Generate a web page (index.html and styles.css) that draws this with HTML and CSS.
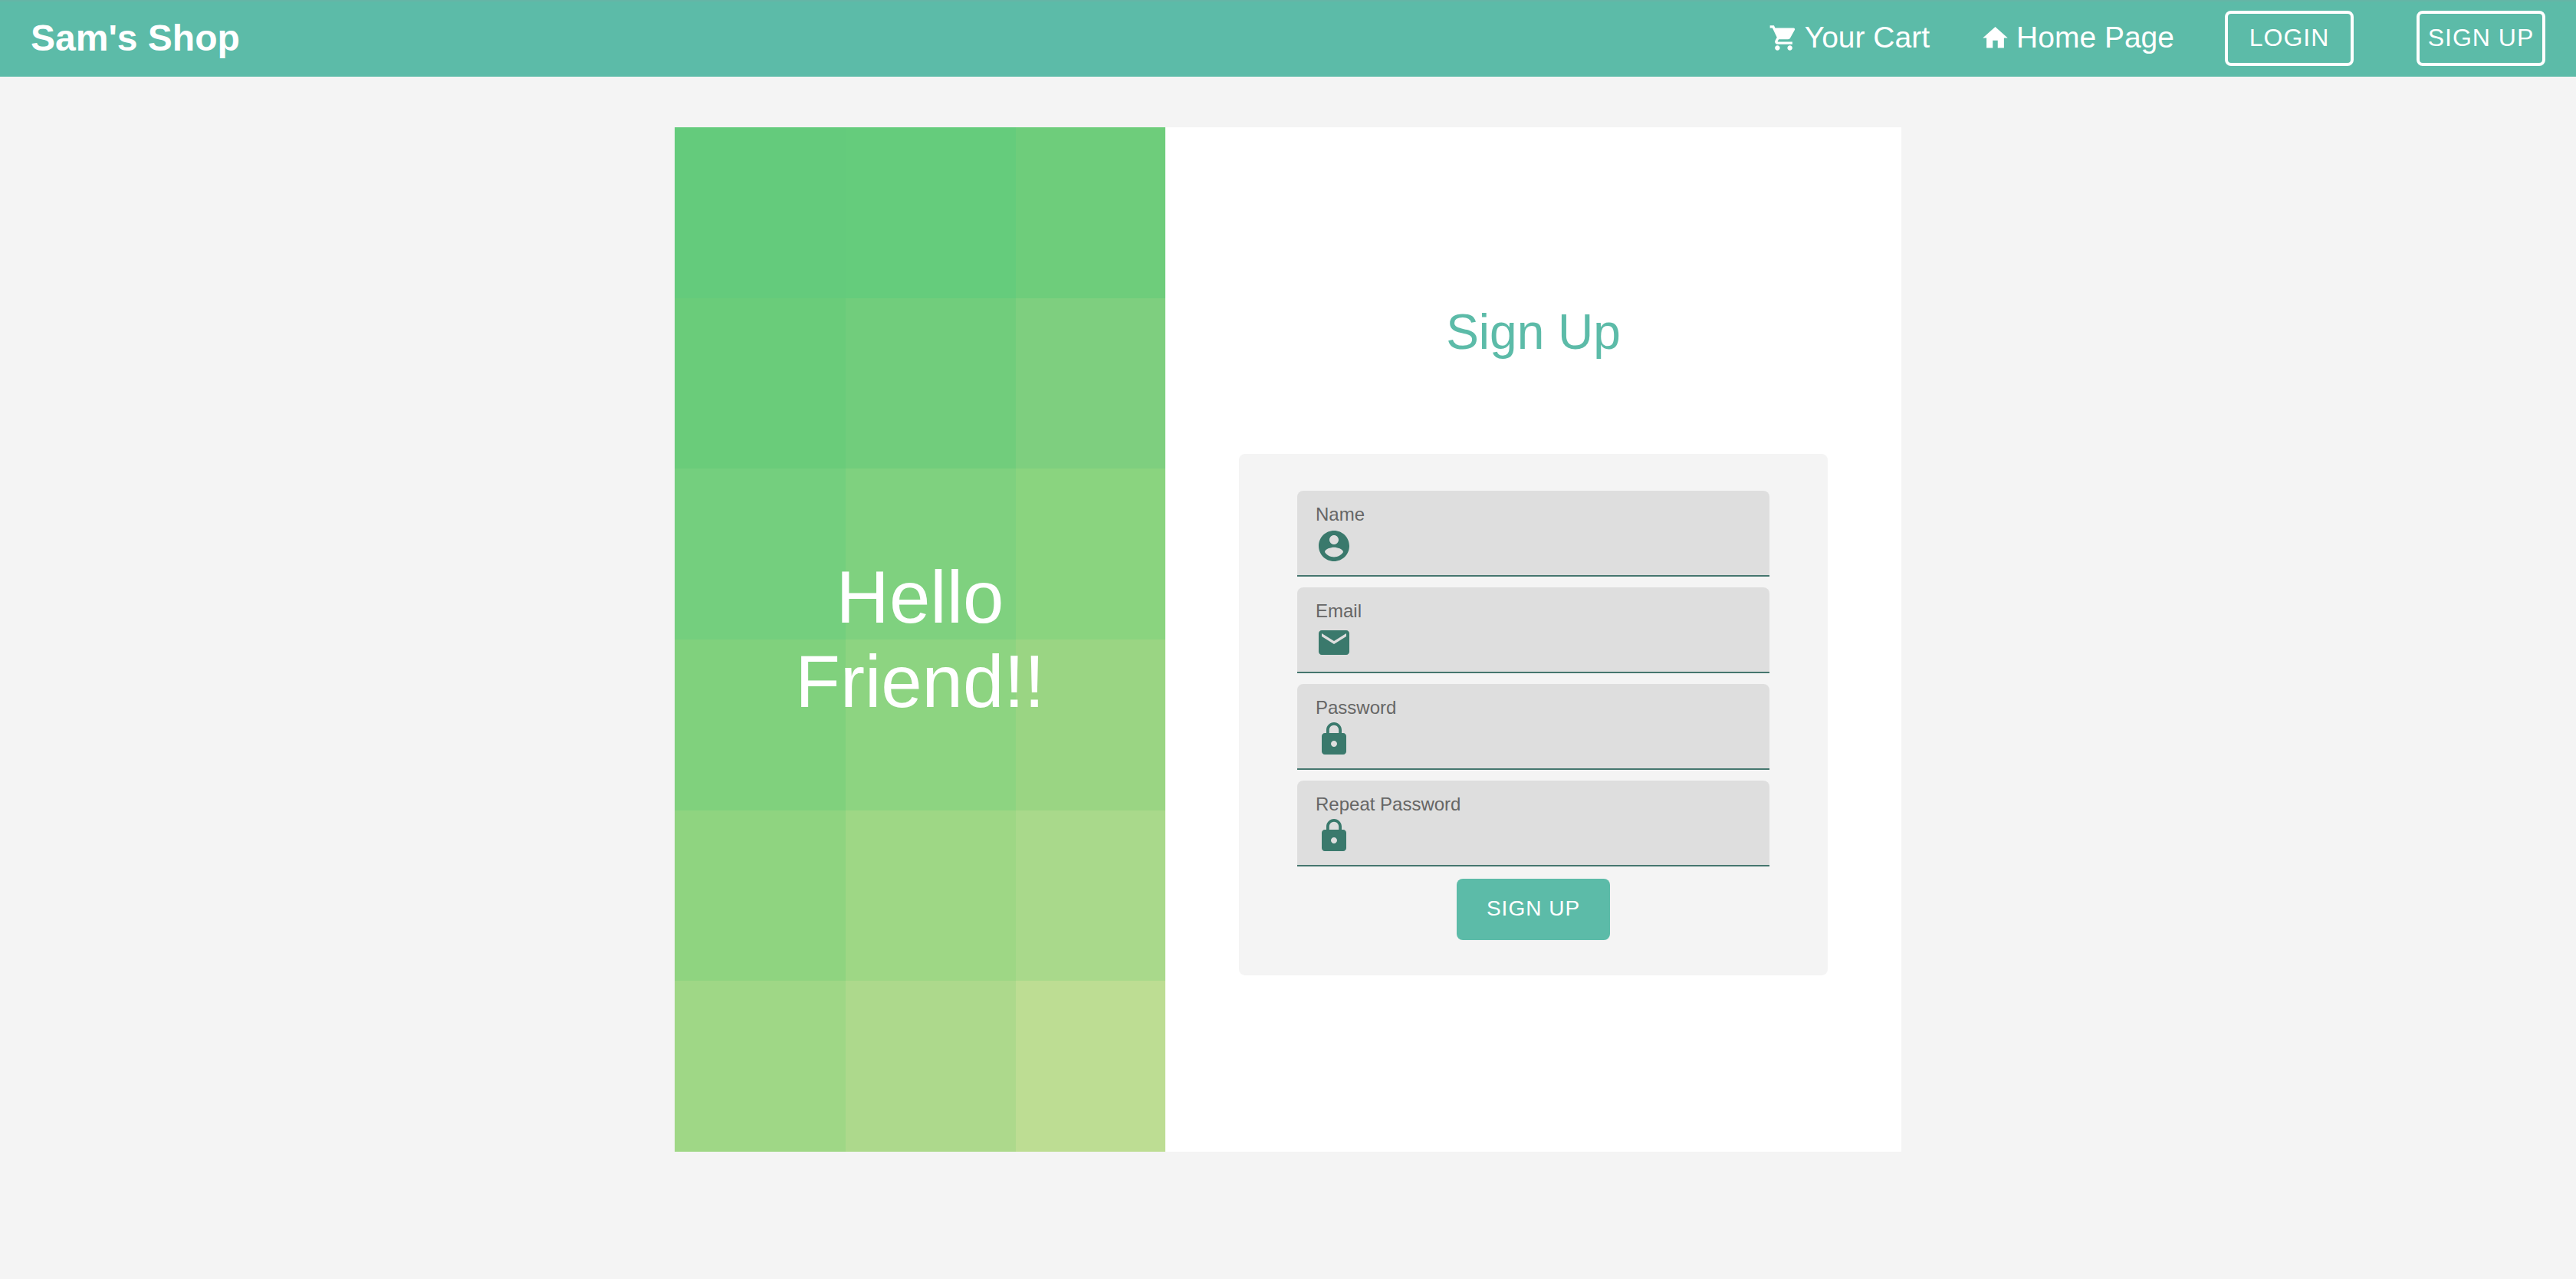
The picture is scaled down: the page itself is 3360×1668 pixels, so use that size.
FILE: index.html
```html
<!DOCTYPE html>
<html lang="en">
<head>
  <meta charset="utf-8">
  <meta name="viewport" content="width=device-width, initial-scale=1">
  <title>Sam's Shop</title>
  <link rel="stylesheet" href="styles.css">
</head>
<body>
  <header class="topbar">
    <a class="brand" href="#">Sam's Shop</a>
    <nav class="nav">
      <a class="nav-link" href="#">
        <svg class="nav-icon" viewBox="0 0 24 24" aria-hidden="true"><path d="M7 18c-1.1 0-1.99.9-1.99 2S5.9 22 7 22s2-.9 2-2-.9-2-2-2zM1 2v2h2l3.6 7.59-1.35 2.45c-.16.28-.25.61-.25.96 0 1.1.9 2 2 2h12v-2H7.42c-.14 0-.25-.11-.25-.25l.03-.12.9-1.63h7.45c.75 0 1.41-.41 1.75-1.03l3.58-6.49c.08-.14.12-.31.12-.48 0-.55-.45-1-1-1H5.21l-.94-2H1zm16 16c-1.1 0-1.99.9-1.99 2s.89 2 1.99 2 2-.9 2-2-.9-2-2-2z"/></svg>
        Your Cart
      </a>
      <a class="nav-link" href="#">
        <svg class="nav-icon" viewBox="0 0 24 24" aria-hidden="true"><path d="M10 20v-6h4v6h5v-8h3L12 3 2 12h3v8z"/></svg>
        Home Page
      </a>
      <div class="nav-actions">
        <button class="outline-button" type="button">LOGIN</button>
        <button class="outline-button" type="button">SIGN UP</button>
      </div>
    </nav>
  </header>

  <main class="page">
    <section class="card">
      <div class="welcome">
        <svg class="mosaic" viewBox="0 0 3 6" preserveAspectRatio="xMinYMin slice" shape-rendering="crispEdges" aria-hidden="true">
          <rect x="0" y="0" width="1" height="1" fill="#64cb7c"/>
          <rect x="1" y="0" width="1" height="1" fill="#65cc7c"/>
          <rect x="2" y="0" width="1" height="1" fill="#6ecd7b"/>
          <rect x="0" y="1" width="1" height="1" fill="#6acc7a"/>
          <rect x="1" y="1" width="1" height="1" fill="#71cd7c"/>
          <rect x="2" y="1" width="1" height="1" fill="#7ecf7f"/>
          <rect x="0" y="2" width="1" height="1" fill="#74cf7e"/>
          <rect x="1" y="2" width="1" height="1" fill="#7fd17f"/>
          <rect x="2" y="2" width="1" height="1" fill="#8ad47f"/>
          <rect x="0" y="3" width="1" height="1" fill="#80d17d"/>
          <rect x="1" y="3" width="1" height="1" fill="#8dd481"/>
          <rect x="2" y="3" width="1" height="1" fill="#9ad583"/>
          <rect x="0" y="4" width="1" height="1" fill="#8fd480"/>
          <rect x="1" y="4" width="1" height="1" fill="#9ed785"/>
          <rect x="2" y="4" width="1" height="1" fill="#a9d98b"/>
          <rect x="0" y="5" width="1" height="1" fill="#9fd786"/>
          <rect x="1" y="5" width="1" height="1" fill="#add98c"/>
          <rect x="2" y="5" width="1" height="1" fill="#bddd93"/>
        </svg>
        <p class="greeting">Hello<br>Friend!!</p>
      </div>

      <div class="signup">
        <h1 class="title">Sign Up</h1>
        <form class="form">
          <div class="fields">
            <div class="field">
              <label class="field-label" for="name">Name</label>
              <div class="field-row">
                <svg class="field-icon" viewBox="0 0 24 24" aria-hidden="true"><path d="M12 2C6.48 2 2 6.48 2 12s4.48 10 10 10 10-4.48 10-10S17.52 2 12 2zm0 3c1.66 0 3 1.34 3 3s-1.34 3-3 3-3-1.34-3-3 1.34-3 3-3zm0 14.2c-2.5 0-4.71-1.28-6-3.22.03-1.99 4-3.08 6-3.08 1.99 0 5.97 1.09 6 3.08-1.29 1.94-3.5 3.22-6 3.22z"/></svg>
                <input class="field-input" id="name" type="text">
              </div>
            </div>
            <div class="field">
              <label class="field-label" for="email">Email</label>
              <div class="field-row">
                <svg class="field-icon" viewBox="0 0 24 24" aria-hidden="true"><path d="M20 4H4c-1.1 0-1.99.9-1.99 2L2 18c0 1.1.9 2 2 2h16c1.1 0 2-.9 2-2V6c0-1.1-.9-2-2-2zm0 4l-8 5-8-5V6l8 5 8-5v2z"/></svg>
                <input class="field-input" id="email" type="email">
              </div>
            </div>
            <div class="field">
              <label class="field-label" for="password">Password</label>
              <div class="field-row">
                <svg class="field-icon" viewBox="0 0 24 24" aria-hidden="true"><path d="M18 8h-1V6c0-2.76-2.24-5-5-5S7 3.24 7 6v2H6c-1.1 0-2 .9-2 2v10c0 1.1.9 2 2 2h12c1.1 0 2-.9 2-2V10c0-1.1-.9-2-2-2zm-6 9c-1.1 0-2-.9-2-2s.9-2 2-2 2 .9 2 2-.9 2-2 2zm3.1-9H8.900V6c0-1.710 1.390-3.100 3.100-3.100 1.710 0 3.100 1.390 3.100 3.100v2z"/></svg>
                <input class="field-input" id="password" type="password">
              </div>
            </div>
            <div class="field">
              <label class="field-label" for="repeat">Repeat Password</label>
              <div class="field-row">
                <svg class="field-icon" viewBox="0 0 24 24" aria-hidden="true"><path d="M18 8h-1V6c0-2.76-2.24-5-5-5S7 3.24 7 6v2H6c-1.1 0-2 .9-2 2v10c0 1.1.9 2 2 2h12c1.1 0 2-.9 2-2V10c0-1.1-.9-2-2-2zm-6 9c-1.1 0-2-.9-2-2s.9-2 2-2 2 .9 2 2-.9 2-2 2zm3.1-9H8.900V6c0-1.710 1.390-3.100 3.100-3.100 1.710 0 3.100 1.390 3.100 3.100v2z"/></svg>
                <input class="field-input" id="repeat" type="password">
              </div>
            </div>
          </div>
          <button class="submit" type="submit">SIGN UP</button>
        </form>
      </div>
    </section>
  </main>
</body>
</html>
```
FILE: styles.css
```css
:root {
  --teal: #5cbba8;
  --teal-dark: #3a796c;
  --page: #f4f4f4;
}

* {
  box-sizing: border-box;
}

body {
  margin: 0;
  background: var(--page);
  font-family: "Liberation Sans", Arial, sans-serif;
}

.topbar {
  display: flex;
  align-items: center;
  justify-content: space-between;
  min-height: 100px;
  padding: 0 40px;
  background: var(--teal);
  box-shadow: inset 0 2px #65b5a6;
  color: #fff;
}

.brand {
  padding-bottom: 2px;
  color: inherit;
  font-size: 48px;
  font-weight: bold;
  text-decoration: none;
}

.nav {
  display: flex;
  align-items: center;
  gap: 66px;
}

.nav-link {
  display: flex;
  align-items: center;
  gap: 8px;
  padding-bottom: 2px;
  color: inherit;
  font-size: 39px;
  line-height: 44px;
  text-decoration: none;
}

.nav-icon {
  width: 39px;
  height: 39px;
  fill: currentColor;
}

.nav-actions {
  display: flex;
  gap: 82px;
}

.outline-button {
  width: 168px;
  height: 72px;
  padding: 0 0 2px;
  border: 4px solid #fff;
  border-radius: 8px;
  background: transparent;
  color: #fff;
  font-family: inherit;
  font-size: 32px;
  letter-spacing: 1px;
}

.page {
  padding: 66px 40px;
}

.card {
  display: grid;
  grid-template-columns: 2fr 3fr;
  max-width: 1600px;
  margin: 0 auto;
  background: #fff;
}

.welcome {
  position: relative;
  display: flex;
  align-items: center;
  justify-content: center;
}

.mosaic {
  position: absolute;
  inset: 0;
  width: 100%;
  height: 100%;
}

.greeting {
  position: relative;
  margin: 0;
  color: #fff;
  font-size: 96px;
  line-height: 110px;
  text-align: center;
}

.signup {
  display: flex;
  flex-direction: column;
  align-items: center;
  gap: 122px;
  padding: 230px 96px;
}

.title {
  margin: 0;
  color: var(--teal);
  font-size: 64px;
  font-weight: normal;
  line-height: 74px;
}

.form {
  display: flex;
  flex-direction: column;
  align-items: center;
  gap: 16px;
  width: 100%;
  padding: 48px 76px 46px;
  border-radius: 8px;
  background: var(--page);
}

.fields {
  display: flex;
  flex-direction: column;
  gap: 14px;
  width: 100%;
}

.field {
  padding: 16px 24px 14px;
  border-bottom: 2px solid #45766e;
  border-radius: 8px 8px 0 0;
  background: #dedede;
}

.field-label {
  display: block;
  margin-bottom: 2px;
  color: #666;
  font-size: 24px;
  line-height: 30px;
}

.field-row {
  display: flex;
  gap: 16px;
}

.field-icon {
  width: 48px;
  height: 48px;
  fill: var(--teal-dark);
}

.field-input {
  flex: 1;
  min-width: 0;
  padding: 0;
  border: 0;
  outline: 0;
  background: transparent;
  font: inherit;
  font-size: 32px;
}

.submit {
  width: 200px;
  height: 80px;
  padding: 0 0 2px;
  border: 0;
  border-radius: 8px;
  background: var(--teal);
  color: #fff;
  font-family: inherit;
  font-size: 28px;
  letter-spacing: 1px;
}
```
